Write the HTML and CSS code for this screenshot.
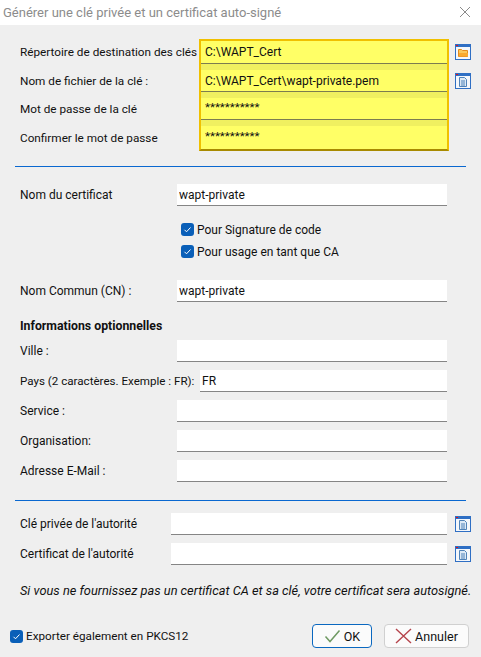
FILE: index.html
```html
<!DOCTYPE html>
<html lang="fr">
<head>
    <meta charset="utf-8">
    <title>Générer une clé privée et un certificat auto-signé</title>
    <link rel="stylesheet" href="styles.css">
</head>
<body>
    <header class="titlebar">
        <span class="title">Générer une clé privée et un certificat auto-signé</span>
        <svg class="close" width="12" height="12" viewBox="0 0 12 12"><path d="M1 1l10 10M11 1L1 11" stroke="#8a8a8a" stroke-width="1" fill="none"/></svg>
    </header>

    <main class="dialog">
        <section class="keys">
            <div class="key-labels">
                <label>Répertoire de destination des clés</label>
                <label>Nom de fichier de la clé :</label>
                <label>Mot de passe de la clé</label>
                <label>Confirmer le mot de passe</label>
            </div>
            <div class="highlight">
                <input class="yellow" value="C:\WAPT_Cert">
                <input class="yellow" value="C:\WAPT_Cert\wapt-private.pem">
                <input class="yellow secret" value="***********">
                <input class="yellow secret" value="***********">
            </div>
            <div class="key-icons">
                <svg class="icon" width="16" height="16" viewBox="0 0 16 16">
                    <rect x="0.5" y="0.5" width="15" height="15" fill="#f4f7fb" stroke="#2f6fc4"/>
                    <rect x="0" y="0" width="16" height="3" fill="#2f6fc4"/>
                    <rect x="1" y="1" width="2" height="1" fill="#e01020"/>
                    <path d="M3.5 12.5v-7h3l1 1h5v6z" fill="#fbc85a" stroke="#e58a1c"/>
                    <path d="M4 9h9v3.5H4z" fill="#f9a92f"/>
                </svg>
                <svg class="icon" width="16" height="16" viewBox="0 0 16 16">
                    <rect x="0.5" y="0.5" width="15" height="15" fill="#f4f7fb" stroke="#2f6fc4"/>
                    <rect x="0" y="0" width="16" height="3" fill="#2f6fc4"/>
                    <rect x="1" y="1" width="2" height="1" fill="#e01020"/>
                    <path d="M4.5 4.5h5l2 2v7h-7z" fill="#dce9f6" stroke="#4f82b8"/>
                    <path d="M6 8h4M6 10h4M6 12h4" stroke="#4f82b8"/>
                </svg>
            </div>
        </section>

        <hr class="rule rule-top">

        <div class="row row-cert"><label>Nom du certificat</label><input value="wapt-private"></div>

        <div class="checks">
            <div class="check-row">
                <span class="check"><svg width="13" height="13" viewBox="0 0 13 13"><path d="M3.5 6.8l2 2 4-4.3" stroke="#fff" stroke-width="1" fill="none"/></svg></span>
                <span>Pour Signature de code</span>
            </div>
            <div class="check-row">
                <span class="check"><svg width="13" height="13" viewBox="0 0 13 13"><path d="M3.5 6.8l2 2 4-4.3" stroke="#fff" stroke-width="1" fill="none"/></svg></span>
                <span>Pour usage en tant que CA</span>
            </div>
        </div>

        <div class="row row-cn"><label>Nom Commun (CN) :</label><input value="wapt-private"></div>

        <h2 class="subhead">Informations optionnelles</h2>

        <div class="optional">
            <div class="row"><label>Ville :</label><input></div>
            <div class="row row-country"><label>Pays (2 caractères. Exemple : FR):</label><input value="FR"></div>
            <div class="row"><label>Service :</label><input></div>
            <div class="row"><label>Organisation:</label><input></div>
            <div class="row"><label>Adresse E-Mail :</label><input></div>
        </div>

        <hr class="rule rule-bottom">

        <div class="authority">
            <div class="row row-auth">
                <label>Clé privée de l'autorité</label><input>
                <svg class="icon" width="16" height="16" viewBox="0 0 16 16">
                    <rect x="0.5" y="0.5" width="15" height="15" fill="#f4f7fb" stroke="#2f6fc4"/>
                    <rect x="0" y="0" width="16" height="3" fill="#2f6fc4"/>
                    <rect x="1" y="1" width="2" height="1" fill="#e01020"/>
                    <path d="M4.5 4.5h5l2 2v7h-7z" fill="#dce9f6" stroke="#4f82b8"/>
                    <path d="M6 8h4M6 10h4M6 12h4" stroke="#4f82b8"/>
                </svg>
            </div>
            <div class="row row-auth">
                <label>Certificat de l'autorité</label><input>
                <svg class="icon" width="16" height="16" viewBox="0 0 16 16">
                    <rect x="0.5" y="0.5" width="15" height="15" fill="#f4f7fb" stroke="#2f6fc4"/>
                    <rect x="0" y="0" width="16" height="3" fill="#2f6fc4"/>
                    <rect x="1" y="1" width="2" height="1" fill="#e01020"/>
                    <path d="M4.5 4.5h5l2 2v7h-7z" fill="#dce9f6" stroke="#4f82b8"/>
                    <path d="M6 8h4M6 10h4M6 12h4" stroke="#4f82b8"/>
                </svg>
            </div>
        </div>

        <p class="note">Si vous ne fournissez pas un certificat CA et sa clé, votre certificat sera autosigné.</p>

        <footer class="actions">
            <div class="check-row export">
                <span class="check"><svg width="13" height="13" viewBox="0 0 13 13"><path d="M3.5 6.8l2 2 4-4.3" stroke="#fff" stroke-width="1" fill="none"/></svg></span>
                <span>Exporter également en PKCS12</span>
            </div>
            <button class="btn btn-ok">
                <svg width="17" height="14" viewBox="0 0 17 14"><path d="M1.5 7.5l4.5 5L15.5 1.5" stroke="#6f9a63" stroke-width="1.5" fill="none"/></svg>
                OK
            </button>
            <button class="btn btn-cancel">
                <svg width="17" height="16" viewBox="0 0 17 16"><path d="M1 1l15 14M16 1L1 15" stroke="#b5444c" stroke-width="1.4" fill="none"/></svg>
                Annuler
            </button>
        </footer>
    </main>
</body>
</html>
```

FILE: styles.css
```css
* {
    box-sizing: border-box;
}
html, body {
    height: 100%;
}
body {
    margin: 0;
    background: #efefef;
    color: #111;
    font-family: Roboto, Arial, sans-serif;
    font-size: 12px;
    overflow: hidden;
}
.titlebar {
    height: 25px;
    background: #fff;
    display: flex;
    align-items: center;
    justify-content: space-between;
    padding: 0 10px 1px 3px;
    color: #8c8c8c;
}
.title {
    font-size: 13px;
}
.dialog {
    display: flex;
    flex-direction: column;
}
label {
    white-space: nowrap;
}
input {
    display: block;
    border: 0;
    border-bottom: 1px solid #858585;
    background: #fff;
    color: #111;
    font: inherit;
    height: 22px;
    padding: 0 2px;
    outline: none;
}

/* highlighted block at the top */
.keys {
    display: flex;
    margin-top: 14px;
    height: 112px;
}
.key-labels {
    width: 199px;
    padding: 2px 0 0 20px;
    display: flex;
    flex-direction: column;
    font-size: 11.75px;
}
.key-labels label {
    flex: none;
    height: 28.6px;
    line-height: 23px;
}
.highlight {
    width: 250px;
    background: #f0f060;
    border: 2px solid #f0c000;
    border-bottom-color: #a88a00;
    display: flex;
    flex-direction: column;
    gap: 6px;
}
.highlight .yellow {
    flex: none;
    width: 100%;
    background: #ffff66;
    border-bottom-color: #7c7c50;
    padding-left: 4px;
}
.highlight .yellow:first-child,
.highlight .yellow:last-child {
    height: 23px;
}
.highlight .yellow:last-child {
    border-bottom: 0;
}
.highlight .secret {
    padding-bottom: 3px;
    font-size: 11.5px;
}
.key-icons {
    padding: 5px 0 0 6px;
    display: flex;
    flex-direction: column;
    gap: 13px;
}
.icon {
    display: block;
    flex: none;
}

.rule {
    width: 451px;
    margin: 0 0 0 15px;
    border: 0;
    border-top: 1px solid #0a68d0;
    height: 1px;
}
.rule-top {
    margin-top: 15px;
}
.rule-bottom {
    margin-top: 18px;
}

.row {
    display: flex;
    align-items: center;
    height: 22px;
    padding-left: 20px;
}
.row label {
    width: 157px;
}
.row input {
    width: 270px;
}
.row-cert {
    margin-top: 17px;
}
.row-country label {
    width: 180px;
    font-size: 11.6px;
}
.row-country input {
    width: 247px;
}

.checks {
    margin: 17px 0 0 181px;
    display: flex;
    flex-direction: column;
    gap: 9px;
}
.check-row {
    display: flex;
    align-items: center;
    gap: 3px;
    height: 13px;
}
.check {
    width: 13px;
    height: 13px;
    border-radius: 3px;
    background: #0a5fb8;
    display: block;
    flex: none;
}
.check svg {
    display: block;
}
.checks + .row-cn {
    margin-top: 22px;
}

.subhead {
    margin: 16px 0 0 20px;
    font-size: 12.3px;
    font-weight: 700;
    line-height: 16px;
    height: 16px;
}
.optional {
    margin-top: 6px;
    display: flex;
    flex-direction: column;
    gap: 8px;
}

.authority {
    margin-top: 12px;
    display: flex;
    flex-direction: column;
    gap: 8px;
}
.row-auth label {
    width: 151px;
}
.row-auth input {
    width: 276px;
}
.row-auth .icon {
    margin-left: 8px;
}

.note {
    margin: 18px 0 0 20px;
    font-style: italic;
    font-size: 12.8px;
    line-height: 16px;
    white-space: nowrap;
}

.actions {
    display: flex;
    align-items: center;
    margin-top: 25px;
    padding-left: 10px;
    height: 24px;
}
.export {
    width: 302px;
    font-size: 11.7px;
}
.btn {
    height: 24px;
    display: flex;
    align-items: center;
    justify-content: center;
    gap: 3px;
    background: #fbfbfb;
    border: 1px solid #d0d0d0;
    border-radius: 4px;
    color: #111;
    font: inherit;
    font-size: 12.5px;
    padding: 0;
}
.btn-ok {
    width: 60px;
    border-color: #0a68c0;
}
.btn-cancel {
    width: 85px;
    margin-left: 12px;
}
```
